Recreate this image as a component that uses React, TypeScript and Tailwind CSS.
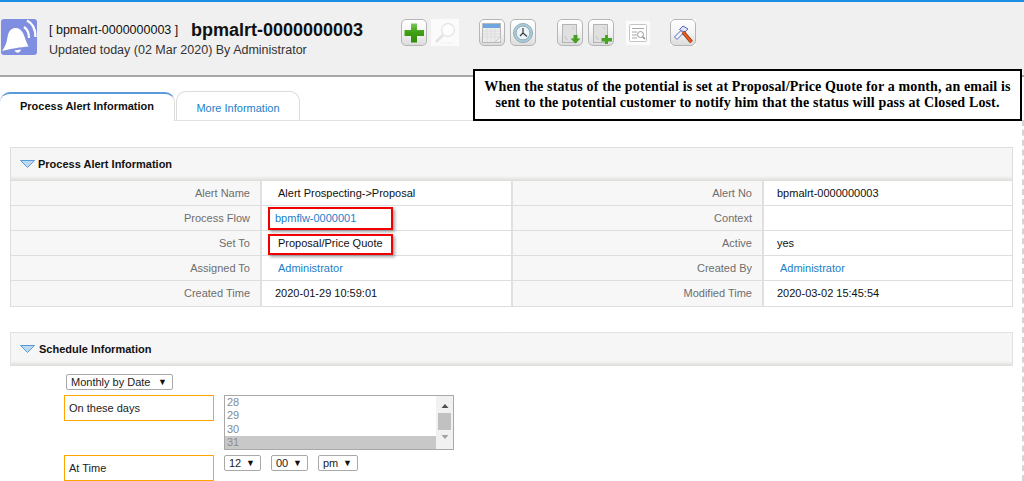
const A = "text-[#1b7fc9]";
const font = { fontFamily: '"Liberation Sans", Arial, sans-serif' };

function Bell() {
  return (
    <svg width="37" height="37" viewBox="0 0 37 37" className="shrink-0">
      <rect x="1" y="0" width="36" height="36" rx="3" fill="#7f8ee0" />
      <path d="M2 32 C4 29 6 26 7 21 C8 15 9 11 13 9.5 C17 8 21 10 23 14 C25 18 26 23 28.5 27.5 C21 28 10 30 2 32 Z" fill="#fff" />
      <path d="M14.5 31.5 C16 34.5 20 34.5 21 30.5 Z" fill="#fff" />
      <path d="M24 8 C27 10 29 14 29 19" fill="none" stroke="#fff" strokeWidth="2.2" />
      <path d="M27 1.5 C32 4 35.5 10 35.5 18" fill="none" stroke="#fff" strokeWidth="2.4" />
    </svg>
  );
}

function Btn({ children }: { children: React.ReactNode }) {
  return (
    <div className="w-[26px] h-[27px] rounded-[5px] border border-[#b5b5b5] bg-gradient-to-b from-[#ffffff] via-[#f4f4f4] to-[#dcdcdc] flex items-center justify-center shrink-0">
      {children}
    </div>
  );
}

function Doc({ arrow }: { arrow: "down" | "plus" }) {
  return (
    <svg width="24" height="24" viewBox="0 0 24 24">
      <rect x="4.5" y="3.5" width="14" height="18" fill="#e0e0e0" stroke="#b4b4b4" />
      <path d="M7 15 L8 18 H10 M14 6 L16 8" stroke="#c4c4c4" fill="none" />
      {arrow === "down" ? (
        <path d="M15.5 14 H19.5 V17.5 H22.5 L17.5 22.5 L12.5 17.5 H15.5 Z" fill="#459f20" />
      ) : (
        <path d="M16 14 H19 V17 H23 V20.5 H19 V23 H16 V20.5 H12.5 V17 H16 Z" fill="#48a524" />
      )}
    </svg>
  );
}

function Toolbar() {
  return (
    <div className="flex items-center">
      <Btn>
        <svg width="24" height="24" viewBox="0 0 24 24">
          <defs>
            <linearGradient id="plusG" x1="0" y1="0" x2="0" y2="1">
              <stop offset="0" stopColor="#7cc85a" />
              <stop offset="0.45" stopColor="#3fa014" />
              <stop offset="1" stopColor="#2f8a0c" />
            </linearGradient>
          </defs>
          <path d="M9 2.5 H15 V9 H22 V15 H15 V21.5 H9 V15 H2.5 V9 H9 Z" fill="url(#plusG)" />
        </svg>
      </Btn>
      <div className="ml-[4px] w-[28px] h-[27px] bg-[#fbfbfb] flex items-center justify-center">
        <svg width="26" height="26" viewBox="0 0 26 26">
          <circle cx="16" cy="10" r="6.5" fill="#fdfdfd" stroke="#e6e6e6" strokeWidth="1.4" />
          <path d="M11 15 L4 22" stroke="#e3e3e3" strokeWidth="2.6" />
          <path d="M9 23 H21" stroke="#f0f0f0" />
        </svg>
      </div>
      <div className="ml-[20px]">
        <Btn>
          <svg width="24" height="24" viewBox="0 0 24 24">
            <rect x="2.5" y="2.5" width="18" height="19" fill="#ececec" stroke="#b8b8b8" />
            <rect x="3" y="3" width="17" height="4" fill="#6ea6e0" />
            <path d="M3 10 H20 M3 13 H20 M3 16 H20 M7 7 V21 M11 7 V21 M15 7 V21" stroke="#dddddd" />
            <path d="M15 21 L20.5 16 V21 Z" fill="#f8f8f8" stroke="#c4c4c4" />
          </svg>
        </Btn>
      </div>
      <div className="ml-[5px]">
        <Btn>
          <svg width="24" height="24" viewBox="0 0 24 24">
            <circle cx="12" cy="12" r="9.5" fill="#a9d0e0" stroke="#93a9b5" />
            <circle cx="12" cy="12" r="7" fill="#eef3f6" stroke="#8da3b0" />
            <path d="M12 7 V12 L16 15.5 M12 12 L9 15" stroke="#2f3d48" strokeWidth="1.2" fill="none" />
          </svg>
        </Btn>
      </div>
      <div className="ml-[21px]">
        <Btn><Doc arrow="down" /></Btn>
      </div>
      <div className="ml-[5px]">
        <Btn><Doc arrow="plus" /></Btn>
      </div>
      <div className="ml-[12px] w-[24px] h-[24px] bg-[#fbfbfb] flex items-center justify-center">
        <svg width="22" height="22" viewBox="0 0 22 22">
          <rect x="2.5" y="2.5" width="17" height="17" rx="1" fill="#fff" stroke="#c4c4c4" />
          <path d="M5 6.5 H17 M5 10 H10 M5 13 H10 M5 16 H10" stroke="#a8a8a8" />
          <circle cx="13.5" cy="12.5" r="3" fill="none" stroke="#9a9a9a" />
          <path d="M15.7 14.7 L18 17" stroke="#8a8a8a" strokeWidth="1.4" />
        </svg>
      </div>
      <div className="ml-[20px] bg-white">
        <Btn>
          <svg width="24" height="24" viewBox="0 0 24 24">
            <path d="M3.5 16 L10 9.5 L12.5 12 L6 18.5 Z" fill="#eef2ff" stroke="#5968c0" />
            <path d="M8.5 8.5 L12 5 L17 8 L13.5 11.5 Z" fill="#dfe6f5" stroke="#5968c0" />
            <path d="M12 11 L20.5 21" stroke="#7a3a20" strokeWidth="3.6" />
            <path d="M12 11 L20.5 21" stroke="#ef5a14" strokeWidth="2.2" />
          </svg>
        </Btn>
      </div>
    </div>
  );
}

function SectionHeader({ title, gap }: { title: string; gap: string }) {
  return (
    <div className={`h-[33px] bg-gradient-to-b from-[#f6f6f6] via-[#f6f6f6] via-[85%] to-[#dcdcd8] flex items-center pl-[9px] pb-[1px] ${gap} shrink-0`}>
      <svg width="15" height="8" viewBox="0 0 15 8" className="shrink-0">
        <path d="M0.5 0.5 H14.5 L7.5 7.5 Z" fill="#bcd9f2" stroke="#5a9ad6" />
      </svg>
      <span className="text-[11px] font-bold text-[#111]">{title}</span>
    </div>
  );
}

function Label({ children, last }: { children?: React.ReactNode; last?: boolean }) {
  return (
    <div className={`bg-[#f7f7f7] text-right pr-[10px] text-[#6e6e6e] text-[11px] flex items-center justify-end border-r-2 border-[#e0e0e0] ${last ? "" : "border-b border-b-[#dedede]"}`}>
      {children}
    </div>
  );
}

function Value({ children, pl, link, end, last }: { children?: React.ReactNode; pl: number; link?: boolean; end?: boolean; last?: boolean }) {
  return (
    <div
      className={`bg-white text-[11px] flex items-center ${link ? A : "text-[#111]"} ${end ? "" : "border-r-2 border-[#e0e0e0]"} ${last ? "" : "border-b border-b-[#dedede]"}`}
      style={{ paddingLeft: pl }}
    >
      {children}
    </div>
  );
}

const rows: [string, string, number, boolean, string, string, number, boolean][] = [
  ["Alert Name", "Alert Prospecting->Proposal", 16, false, "Alert No", "bpmalrt-0000000003", 13, false],
  ["Process Flow", "bpmflw-0000001", 13, true, "Context", "", 13, false],
  ["Set To", "Proposal/Price Quote", 16, false, "Active", "yes", 13, false],
  ["Assigned To", "Administrator", 16, true, "Created By", "Administrator", 16, true],
  ["Created Time", "2020-01-29 10:59:01", 13, false, "Modified Time", "2020-03-02 15:45:54", 13, false],
];

function Pick({ label, w }: { label: string; w: string }) {
  return (
    <div className={`${w} h-[16px] border border-[#a9a9a9] rounded-[2px] bg-white text-[11px] text-[#222] flex items-center justify-between pl-[4px] pr-[5px]`}>
      <span>{label}</span>
      <span className="text-[9px] text-[#111] leading-none">▼</span>
    </div>
  );
}

export default function App() {
  return (
    <div className="relative w-[1024px] h-[481px] overflow-hidden bg-white flex flex-col" style={font}>
      <div className="h-[2px] bg-[#1a8fe3] shrink-0" />
      <header className="h-[75px] bg-[#f0f0f0] border-b-2 border-[#a8a8a8] shrink-0 flex items-start pt-[17px]">
        <Bell />
        <div className="ml-[12px] w-[352px]">
          <div className="flex items-center h-[22px] text-[#111]">
            <span className="text-[12.5px] w-[142px]">[ bpmalrt-0000000003 ]</span>
            <span className="text-[18px] font-bold">bpmalrt-0000000003</span>
          </div>
          <div className="text-[12.5px] text-[#333] leading-[15px] mt-[2px]">Updated today (02 Mar 2020) By Administrator</div>
        </div>
        <Toolbar />
      </header>

      <nav className="h-[44px] shrink-0 flex items-end border-b border-[#e2e2e2]">
        <div className="w-[175px] h-[29px] rounded-t-[10px] border-t-2 border-[#5b9bdc] border-r border-r-[#dcdcdc] bg-white text-[11px] font-bold text-[#111] flex items-center justify-center pb-[2px] relative top-[1px]">
          Process Alert Information
        </div>
        <div className="ml-[1px] w-[124px] h-[29px] rounded-t-[10px] border border-b-0 border-[#dcdcdc] bg-white text-[11px] text-[#1b7fc9] flex items-center justify-center pt-[5px]">
          More Information
        </div>
      </nav>

      <main className="flex flex-col pt-[26px] pl-[10px] w-[1013px]">
        <section className="border border-[#dedede] flex flex-col">
          <SectionHeader title="Process Alert Information" gap="gap-[3px]" />
          <div className="grid grid-cols-[251px_251px_251px_1fr] auto-rows-[25px]">
            {rows.map((r, i) => {
              const last = i === rows.length - 1;
              return [
                <Label key={`a${i}`} last={last}>{r[0]}</Label>,
                <Value key={`b${i}`} pl={r[2]} link={r[3]} last={last}>{r[1]}</Value>,
                <Label key={`c${i}`} last={last}>{r[4]}</Label>,
                <Value key={`d${i}`} pl={r[6]} link={r[7]} end last={last}>{r[5]}</Value>,
              ];
            })}
          </div>
        </section>

        <section className="mt-[25px] flex flex-col">
          <div className="border border-b-0 border-[#e2e2e2]">
            <SectionHeader title="Schedule Information" gap="gap-[4px]" />
          </div>
          <div className="pl-[54px] pt-[8px] flex flex-col">
            <Pick label="Monthly by Date" w="ml-[2px] w-[107px]" />
            <div className="mt-[5px] flex items-start gap-[10px]">
              <div className="w-[150px] h-[26px] border border-[#ffa500] text-[11px] text-[#222] flex items-center pl-[4px]">On these days</div>
              <div className="w-[230px] h-[55px] border border-[#a9a9a9] bg-white flex">
                <div className="flex-1 flex flex-col text-[11px] text-[#7f8a96] leading-[13.3px]">
                  <span className="pl-[2px]">28</span>
                  <span className="pl-[2px]">29</span>
                  <span className="pl-[2px]">30</span>
                  <span className="pl-[2px] bg-[#c8c8c8] text-[#8d8d8d] h-[13px]">31</span>
                </div>
                <div className="w-[17px] bg-[#f1f1f1] flex flex-col items-center">
                  <svg width="8" height="14" viewBox="0 0 8 14"><path d="M0.5 12 L4 8 L7.5 12 Z" fill="#505050" /></svg>
                  <div className="w-[13px] h-[17px] mt-[3px] bg-[#c1c1c1]" />
                  <svg width="8" height="14" viewBox="0 0 8 14" className="mt-[2px]"><path d="M0.5 3 H7.5 L4 7 Z" fill="#a3a3a3" /></svg>
                </div>
              </div>
            </div>
            <div className="mt-[5px] flex items-start gap-[10px]">
              <div className="w-[150px] h-[26px] border border-[#ffa500] text-[11px] text-[#222] flex items-center pl-[4px]">At Time</div>
              <div className="flex gap-[10px]">
                <Pick label="12" w="w-[37px]" />
                <Pick label="00" w="w-[37px]" />
                <Pick label="pm" w="w-[40px]" />
              </div>
            </div>
          </div>
        </section>
      </main>

      <div className="absolute left-[473px] top-[69px] w-[549px] h-[52px] border-2 border-black bg-white z-10 flex flex-col items-center justify-center text-center text-[14px] font-bold text-black leading-[16px] tracking-[0.14px]" style={{ fontFamily: '"Liberation Serif", "Times New Roman", serif' }}>
        <span>When the status of the potential is set at Proposal/Price Quote for a month, an email is</span>
        <span>sent to the potential customer to notify him that the status will pass at Closed Lost.</span>
      </div>

      <div className="absolute left-[268px] top-[207px] w-[125px] h-[23px] border-2 border-[#f00000] shadow-[2px_2px_3px_rgba(0,0,0,0.35)]" />
      <div className="absolute left-[268px] top-[234px] w-[125px] h-[21px] border-2 border-[#f00000] shadow-[2px_2px_3px_rgba(0,0,0,0.35)]" />

      <div className="absolute left-[1022px] top-[120px] h-[361px] border-l-2 border-dashed border-[#d4d4d4]" />
    </div>
  );
}
